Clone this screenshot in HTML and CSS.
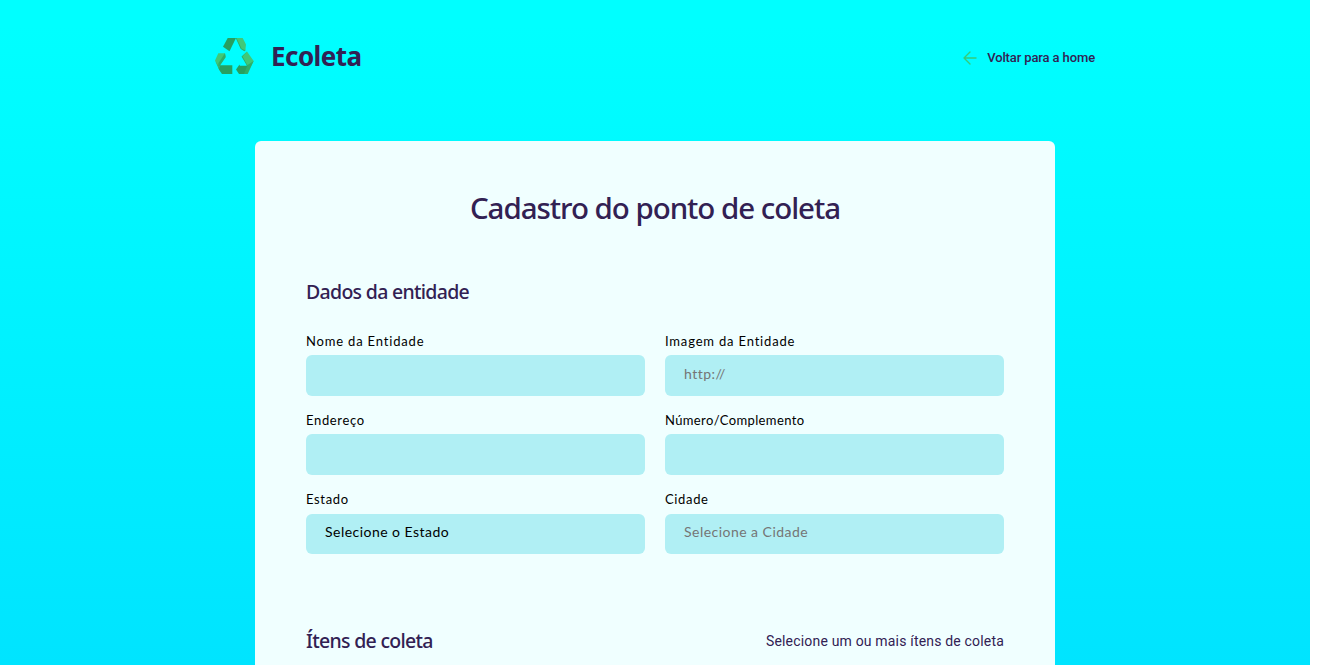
FILE: index.html
```html
<!DOCTYPE html>
<html lang="pt-BR">
<head>
<meta charset="utf-8">
<title>Ecoleta</title>
<link rel="stylesheet" href="styles.css">
</head>
<body>
<div class="page">
  <header class="header">
    <div class="brand">
      <svg class="logo" width="40" height="38" viewBox="0 0 40 38">
        <path fill="#27a060" d="M9 9.7L13.7 1H22l-6.5 13.3z"/>
        <path fill="#2fae68" d="M21.7 1l5 11 3.6 2.3 1.2-1L26 1z"/>
        <path fill="#41c878" d="M22.5 1h6.2L32 7.5l-.7 6-3.8-2z"/>
        <path fill="#41c878" d="M1 23.5l3.3-7.2H11l.5 3.5-6 8.8v4z"/>
        <path fill="#2fae68" d="M11 16.3l.7 4-6.2 9v4L4 30l.5-4z"/>
        <path fill="#35b86f" d="M1 23.5l4.5 6.8L8 37l-3-4.5z"/>
        <path fill="#27a060" d="M5.8 28.3h12.5V37H8l-2.8-4.5z"/>
        <path fill="#2fae68" d="M27.5 19.5l5.5-5-1 3 4 12-2 1z"/>
        <path fill="#41c878" d="M28.5 19.5l4.5-5 6.7 9.5-3.5 6.5-3-2.7z"/>
        <path fill="#2fae68" d="M39.7 24L33.7 37h-5l4-8.5z"/>
        <path fill="#27a060" d="M22 32.6l3.5-5 .3 1.2h7.5L30 37h-5z"/>
      </svg>
      <span class="name">Ecoleta</span>
    </div>
    <a class="back">
      <svg width="14" height="14" viewBox="0 0 14 14" fill="none" stroke="#34cb79" stroke-width="1.4" stroke-linecap="round" stroke-linejoin="round"><path d="M13 7H1M7 1L1 7l6 6"/></svg>
      <span>Voltar para a home</span>
    </a>
  </header>
  <main class="card">
    <h1 class="title">Cadastro do ponto de coleta</h1>
    <h2 class="section t-data">Dados da entidade</h2>
    <div class="grid">
      <div class="field"><label class="l1">Nome da Entidade</label><div class="input"></div></div>
      <div class="field"><label class="l2">Imagem da Entidade</label><div class="input hint">http://</div></div>
      <div class="field"><label>Endereço</label><div class="input"></div></div>
      <div class="field"><label class="l4">Número/Complemento</label><div class="input"></div></div>
      <div class="field select"><label>Estado</label><div class="input">Selecione o Estado</div></div>
      <div class="field select"><label>Cidade</label><div class="input hint">Selecione a Cidade</div></div>
    </div>
    <div class="items">
      <h2 class="section">Ítens de coleta</h2>
      <p class="note">Selecione um ou mais ítens de coleta</p>
    </div>
  </main>
</div>
</body>
</html>
```
FILE: styles.css
```css
* { box-sizing: border-box; margin: 0; padding: 0; }
body { background: #fff; overflow: hidden; }
.page {
  width: 1310px;
  height: 665px;
  overflow: hidden;
  background: linear-gradient(180deg, #00ffff 0%, #00ffff 4%, #00e4ff 100%);
  color: #322153;
}
.header {
  width: 880px;
  height: 141px;
  margin: 0 auto;
  padding: 37px 0 0;
  display: flex;
  justify-content: space-between;
  align-items: flex-start;
}
.brand { display: flex; gap: 17px; height: 38px; align-items: center; }
.logo { margin-left: -1px; }
.name { font: 700 26px/38px "Noto Sans", sans-serif; letter-spacing: -0.55px; }
.back { display: flex; align-items: center; gap: 10px; height: 41px; font: 500 13px/20px Roboto, sans-serif; letter-spacing: -0.12px; }
.card {
  width: 800px;
  height: 600px;
  margin: 0 auto;
  padding: 47px 51px;
  background: #f0ffff;
  border-radius: 6px;
}
.title { height: 40px; font: 500 29.5px/40px "Noto Sans", sans-serif; text-align: center; white-space: nowrap; letter-spacing: -1.04px; }
.section { font: 500 19.5px/28px "Noto Sans", sans-serif; white-space: nowrap; letter-spacing: -0.7px; }
.t-data { margin-top: 50px; }
.grid { display: grid; grid-template-columns: 339px 339px; gap: 16px 20px; margin-top: 27px; }
.field { height: 63px; }
.field label { display: block; height: 22px; font: 400 13px/16px Lato, sans-serif; letter-spacing: 0.65px; color: #000; white-space: nowrap; }
.field .l1, .field .l2 { letter-spacing: 0.82px; }
.field .l4 { letter-spacing: 0.37px; }
.input {
  height: 41px;
  padding: 0 19px;
  background: #b0eff4;
  border-radius: 6px;
  font: 400 14px/38px Lato, sans-serif;
  letter-spacing: 0.47px;
  color: #000;
}
.hint { color: #757575; }
.select label { height: 23px; }
.select .input { height: 40px; line-height: 36px; }
.items { display: flex; justify-content: space-between; align-items: center; margin-top: 73px; }
.note { font: 400 14px/20px Roboto, sans-serif; letter-spacing: 0.18px; }
```
